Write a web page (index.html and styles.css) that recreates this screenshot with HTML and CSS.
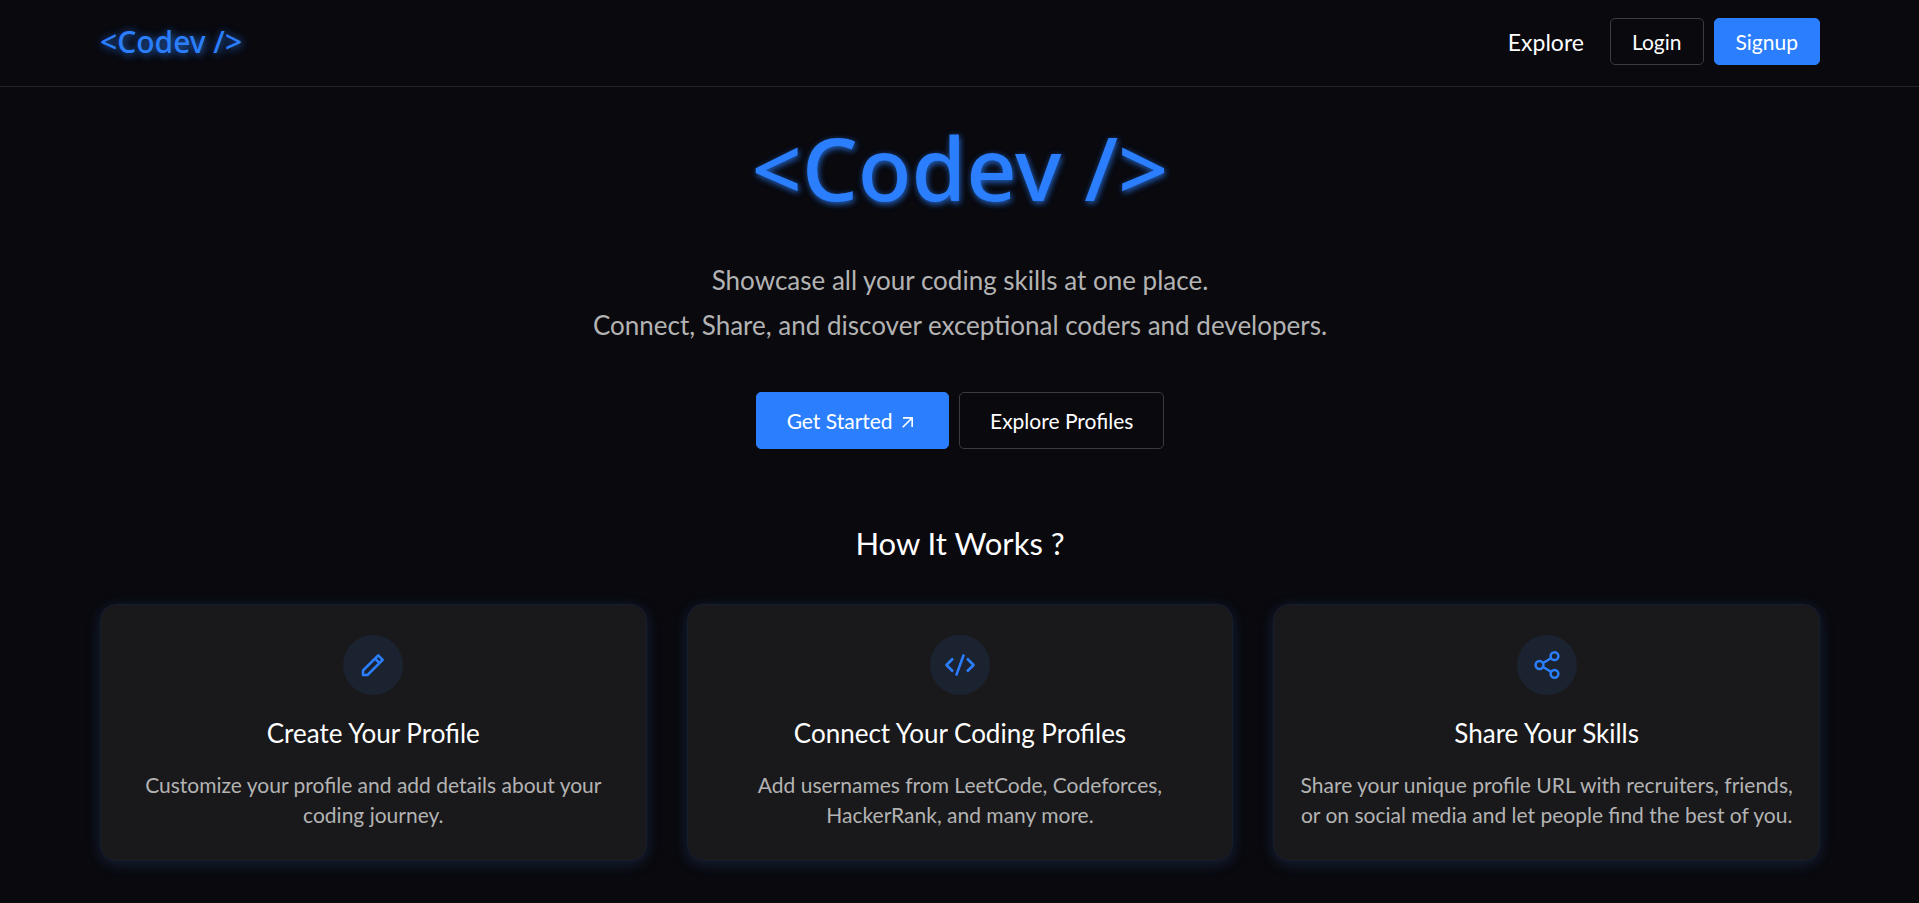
FILE: index.html
```html
<!DOCTYPE html>
<html lang="en">
<head>
<meta charset="utf-8">
<meta name="viewport" content="width=device-width, initial-scale=1">
<title>Codev</title>
<link rel="stylesheet" href="styles.css">
</head>
<body>
<header class="navbar">
  <a class="logo" href="#">&lt;Codev /&gt;</a>
  <nav class="nav-links">
    <a class="nav-link" href="#">Explore</a>
    <div class="nav-actions">
      <button class="btn btn-outline" type="button">Login</button>
      <button class="btn btn-primary" type="button">Signup</button>
    </div>
  </nav>
</header>
<main class="page">
  <section class="hero">
    <h1 class="hero-title">&lt;Codev /&gt;</h1>
    <p class="hero-text">Showcase all your coding skills at one place.<br>Connect, Share, and discover exceptional coders and developers.</p>
    <div class="hero-actions">
      <button class="btn btn-large btn-primary" type="button">Get Started
        <svg class="arrow" viewBox="0 0 24 24" aria-hidden="true"><path d="M6 6v2h8.59L5 17.59 6.41 19 16 9.41V18h2V6z" fill="currentColor"/></svg>
      </button>
      <button class="btn btn-large btn-outline" type="button">Explore Profiles</button>
    </div>
  </section>
  <section class="works">
    <h2 class="works-title">How It Works ?</h2>
    <div class="cards">
      <article class="card">
        <span class="badge"><svg class="icon" viewBox="0 0 30 30" aria-hidden="true"><path d="M5 25v-4.500L20.200 5.300l4.500 4.500L9.500 25zM17 8.500l4.500 4.500" fill="none" stroke="currentColor" stroke-width="2.500" stroke-linejoin="round"/></svg></span>
        <h3 class="card-title">Create Your Profile</h3>
        <p class="card-text">Customize your profile and add details about your coding journey.</p>
      </article>
      <article class="card">
        <span class="badge"><svg class="icon" viewBox="0 0 30 26" aria-hidden="true"><path d="M8 6.500 1.500 13 8 19.500M22 6.500l6.500 6.500-6.500 6.500M18.800 2.500l-7.600 21" fill="none" stroke="currentColor" stroke-width="2.500" stroke-linejoin="round"/></svg></span>
        <h3 class="card-title">Connect Your Coding Profiles</h3>
        <p class="card-text">Add usernames from LeetCode, Codeforces, HackerRank, and many more.</p>
      </article>
      <article class="card">
        <span class="badge"><svg class="icon" viewBox="0 0 30 30" aria-hidden="true"><g fill="none" stroke="currentColor" stroke-width="2.500"><circle cx="7.500" cy="15" r="3.900"/><circle cx="22.500" cy="6.200" r="3.900"/><circle cx="22.500" cy="23.800" r="3.900"/><path d="m11 13 8-4.800M11 17l8 4.800"/></g></svg></span>
        <h3 class="card-title">Share Your Skills</h3>
        <p class="card-text">Share your unique profile URL with recruiters, friends, or on social media and let people find the best of you.</p>
      </article>
    </div>
  </section>
</main>
</body>
</html>
```
FILE: styles.css
```css
* { box-sizing: border-box; margin: 0; }
body {
  min-height: 100vh;
  background: #09090e;
  color: #fff;
  font-family: "Lato", "Open Sans", sans-serif;
}
a { color: inherit; text-decoration: none; }
.navbar {
  display: flex;
  align-items: center;
  justify-content: space-between;
  padding: 18px 99px 21px 100px;
  border-bottom: 1px solid #242428;
}
.logo {
  color: #2b7fff;
  font-family: "Noto Sans", sans-serif;
  font-size: 30px;
  line-height: 40px;
  font-weight: 500;
  text-shadow: 1px 1px 8px rgba(43, 127, 255, 0.9);
}
.nav-links { display: flex; align-items: center; gap: 26px; }
.nav-link { font-size: 23px; line-height: 32px; }
.nav-actions { display: flex; gap: 10px; }
.btn {
  padding: 10px 21px;
  border: 1px solid transparent;
  border-radius: 5px;
  color: #fff;
  font-family: inherit;
  font-size: 21px;
  line-height: 25px;
}
.btn-primary { background: #2b7fff; border-color: #2b7fff; }
.btn-outline { background: transparent; border-color: #3c3c40; }
.btn-large { padding: 15px 30px; }
.page { padding: 20px 99px 40px 100px; }
.hero { text-align: center; }
.hero-title {
  color: #2b7fff;
  font-family: "Noto Sans", sans-serif;
  font-size: 88px;
  line-height: 120px;
  font-weight: 500;
  text-shadow: 1px 2px 6px rgba(43, 127, 255, 0.8);
}
.hero-text { margin-top: 31px; color: #b3b3b3; font-size: 26px; line-height: 45px; }
.hero-actions { display: flex; justify-content: center; gap: 10px; margin-top: 44px; }
.arrow { width: 20px; height: 20px; vertical-align: -3px; }
.works { margin-top: 74px; }
.works-title { text-align: center; font-size: 31px; line-height: 40px; font-weight: 400; }
.cards { display: grid; grid-template-columns: repeat(3, 1fr); gap: 40px; margin-top: 41px; }
.card {
  display: flex;
  flex-direction: column;
  align-items: center;
  padding: 30px 24px;
  border: 1px solid #171c2f;
  border-radius: 16px;
  background: #19191b;
  text-align: center;
  box-shadow: 0 3px 15px rgba(70, 130, 220, 0.2);
}
.badge {
  display: flex;
  align-items: center;
  justify-content: center;
  width: 60px;
  height: 60px;
  border-radius: 50%;
  background: #1b2331;
  color: #2b7fff;
}
.icon { width: 30px; height: 30px; }
.card-title { margin-top: 20px; font-size: 26px; line-height: 36px; font-weight: 400; }
.card-text { margin-top: 19px; color: #b3b3b3; font-size: 21px; line-height: 30px; }
```
